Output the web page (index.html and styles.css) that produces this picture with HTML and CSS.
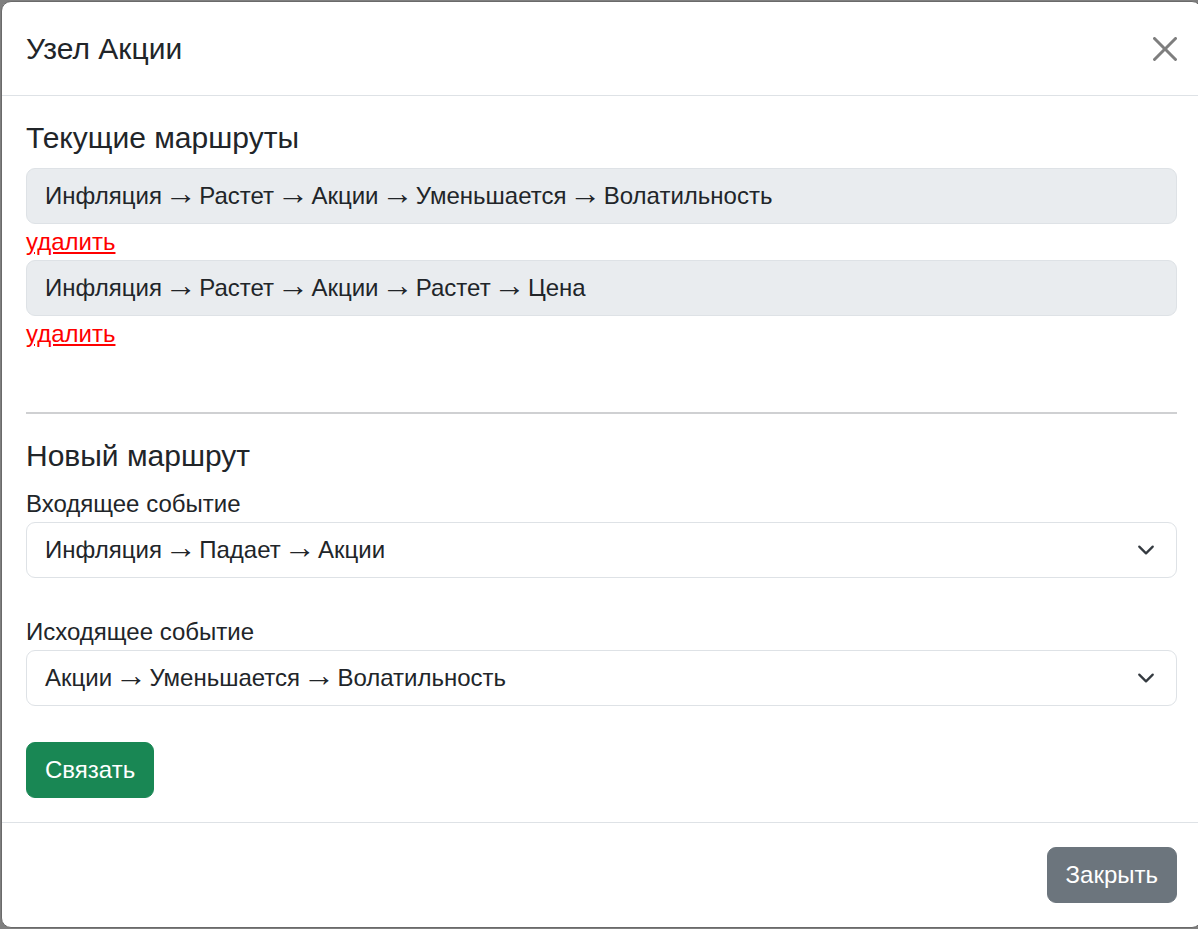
FILE: index.html
```html
<!DOCTYPE html>
<html lang="ru">
<head>
<meta charset="utf-8">
<title>Узел Акции</title>
<link rel="stylesheet" href="styles.css">
</head>
<body>
<div class="modal">
  <div class="modal-header">
    <h5 class="modal-title">Узел Акции</h5>
    <button class="btn-close" type="button" aria-label="Закрыть">
      <svg viewBox="0 0 16 16" width="24" height="24"><path d="M.293.293a1 1 0 0 1 1.414 0L8 6.586 14.293.293a1 1 0 1 1 1.414 1.414L9.414 8l6.293 6.293a1 1 0 0 1-1.414 1.414L8 9.414l-6.293 6.293a1 1 0 0 1-1.414-1.414L6.586 8 .293 1.707a1 1 0 0 1 0-1.414z"/></svg>
    </button>
  </div>
  <div class="modal-body">
    <h5 class="section-title">Текущие маршруты</h5>
    <div class="routes">
      <div class="route">
        <div class="route-box">Инфляция <span class="arrow">→</span> Растет <span class="arrow">→</span> Акции <span class="arrow">→</span> Уменьшается <span class="arrow">→</span> Волатильность</div>
        <a class="delete" href="#">удалить</a>
      </div>
      <div class="route">
        <div class="route-box">Инфляция <span class="arrow">→</span> Растет <span class="arrow">→</span> Акции <span class="arrow">→</span> Растет <span class="arrow">→</span> Цена</div>
        <a class="delete" href="#">удалить</a>
      </div>
    </div>
    <hr class="divider">
    <h5 class="section-title">Новый маршрут</h5>
    <div class="field">
      <div class="label">Входящее событие</div>
      <div class="select" role="combobox" aria-expanded="false">
        <span class="select-value">Инфляция <span class="arrow">→</span> Падает <span class="arrow">→</span> Акции</span>
        <svg class="chevron" viewBox="0 0 16 16" width="24" height="18"><path d="m2 5 6 6 6-6" fill="none" stroke="#343a40" stroke-width="2" stroke-linecap="round" stroke-linejoin="round"/></svg>
      </div>
    </div>
    <div class="field">
      <div class="label">Исходящее событие</div>
      <div class="select" role="combobox" aria-expanded="false">
        <span class="select-value">Акции <span class="arrow">→</span> Уменьшается <span class="arrow">→</span> Волатильность</span>
        <svg class="chevron" viewBox="0 0 16 16" width="24" height="18"><path d="m2 5 6 6 6-6" fill="none" stroke="#343a40" stroke-width="2" stroke-linecap="round" stroke-linejoin="round"/></svg>
      </div>
    </div>
    <div class="actions">
      <button class="btn btn-success" type="button">Связать</button>
    </div>
  </div>
  <div class="modal-footer">
    <button class="btn btn-secondary" type="button">Закрыть</button>
  </div>
</div>
</body>
</html>
```

FILE: styles.css
```css
* { box-sizing: border-box; }
html, body { margin: 0; padding: 0; }
body {
  background: #7f7f7f;
  overflow: hidden;
  font-family: "Liberation Sans", Arial, sans-serif;
  font-size: 24px;
  line-height: 1.5;
  color: #212529;
  height: 929px;
}
.modal {
  margin: 1px 0 0 1px;
  width: 1201px;
  background: #fff;
  border: 1px solid #6a6a6a;
  border-radius: 10px;
}
.modal-header {
  display: flex;
  align-items: center;
  justify-content: space-between;
  padding: 24px;
  border-bottom: 1px solid #dee2e6;
}
.modal-title {
  margin: 0;
  font-size: 30px;
  line-height: 45px;
  font-weight: 400;
}
.btn-close {
  display: flex;
  align-items: center;
  justify-content: center;
  width: 36px;
  height: 36px;
  padding: 6px;
  margin: -6px -6px -6px auto;
  border: 0;
  background: transparent;
  opacity: .5;
}
.btn-close svg { display: block; fill: #000; }
.modal-body {
  padding: 24px;
}
.section-title {
  margin: 0 0 12px;
  font-size: 30px;
  line-height: 36px;
  font-weight: 400;
}
.arrow {
  font-size: 32px;
  line-height: 0;
}
.routes {
  display: flex;
  flex-direction: column;
  padding-bottom: 36px;
}
.route { display: flex; flex-direction: column; align-items: flex-start; }
.route-box {
  align-self: stretch;
  background: #e9ecef;
  border: 1px solid #dee2e6;
  border-radius: 9px;
  padding: 9px 18px;
  line-height: 36px;
  word-spacing: -4px;
}
.delete {
  color: #ff0000;
  text-decoration: underline;
  line-height: 36px;
}
.divider {
  margin: 24px 0;
  border: 0;
  border-top: 2px solid #cfd0d2;
}
.field { margin-bottom: 36px; }
.label { line-height: 36px; }
.select {
  display: flex;
  align-items: center;
  justify-content: space-between;
  height: 56px;
  background: #fff;
  border: 1px solid #dee2e6;
  border-radius: 9px;
  padding: 9px 18px;
  line-height: 36px;
}
.select-value { word-spacing: -4px; }
.chevron { display: block; flex: none; }
.actions { display: flex; }
.btn {
  font-family: inherit;
  font-size: 24px;
  line-height: 36px;
  padding: 9px 18px;
  border: 1px solid transparent;
  border-radius: 9px;
  color: #fff;
}
.btn-success { background: #198754; border-color: #198754; }
.btn-secondary { background: #6c757d; border-color: #6c757d; }
.modal-footer {
  display: flex;
  justify-content: flex-end;
  padding: 18px;
  border-top: 1px solid #dee2e6;
}
.modal-footer .btn { margin: 6px; }
```
